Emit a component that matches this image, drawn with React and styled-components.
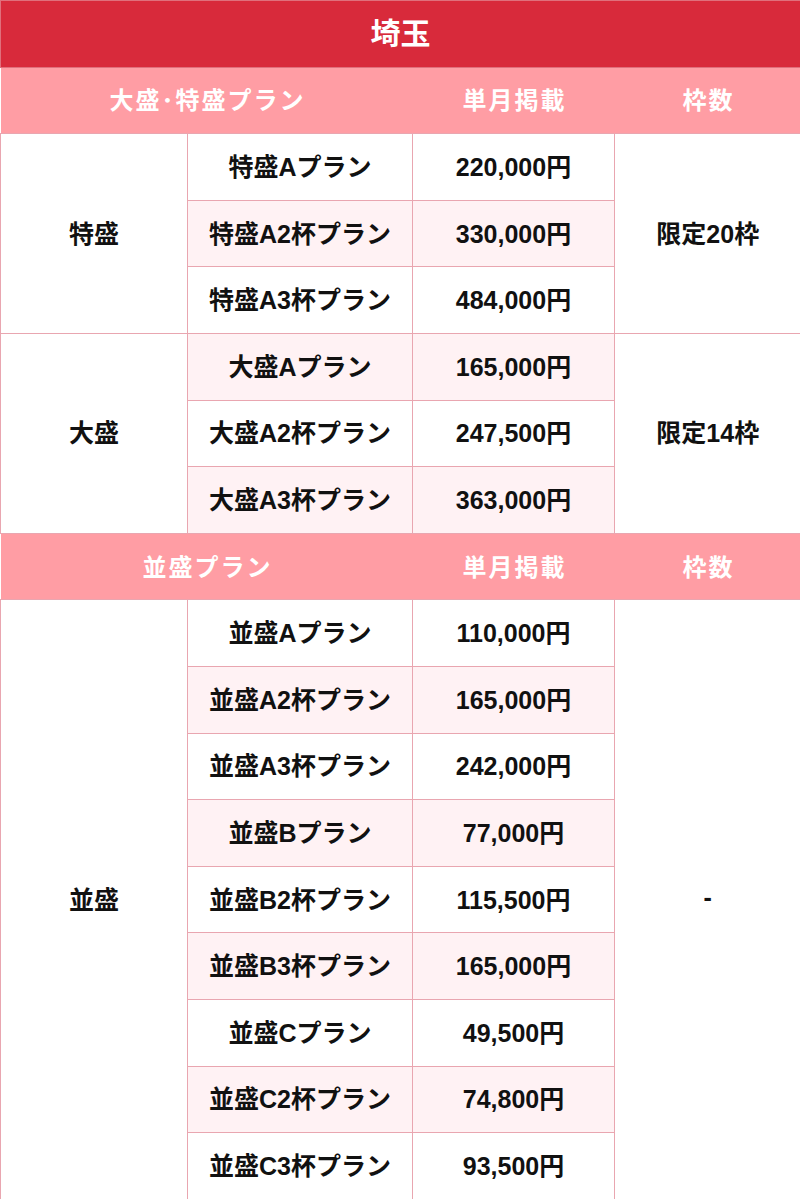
import React from "react";
import styled, { createGlobalStyle } from "styled-components";

const Global = createGlobalStyle`
  html, body { margin: 0; padding: 0; background: #fff; }
  body { font-family: "Liberation Sans", "Noto Sans CJK JP", sans-serif; }
`;

const LINE = "#e9a6b0";

const Table = styled.table`
  width: 800px;
  border-collapse: collapse;
  table-layout: fixed;
  font-weight: 700;
  font-size: 25px;
  color: #111;
`;

const Col = styled.col`
  width: ${(p) => p.$w}px;
`;

const Title = styled.th`
  height: 59.6px;
  background: #d82a3b;
  color: #fff;
  font-size: 30px;
  font-weight: 700;
  text-align: center;
  padding: 0 0 6px;
  border: 1px solid #e0707c;
`;

const HeadCell = styled.th`
  height: 62.6px;
  background: #ff9da4;
  color: #fff;
  font-size: 24px;
  font-weight: 700;
  text-align: center;
  padding: 0 0 3px 2px;
  letter-spacing: 2px;
`;

const Cell = styled.td`
  height: 61.6px;
  padding: 0 0 4px;
  text-align: center;
  vertical-align: middle;
  border: 1px solid ${LINE};
  background: ${(p) => (p.$alt ? "#fff2f4" : "#fff")};
`;

const SideCell = styled(Cell)`
  border-left: 1px solid ${LINE};
`;

const EdgeCell = styled(Cell)`
  border-right: none;
`;

const sections = [
  {
    head: "大盛･特盛プラン",
    groups: [
      {
        name: "特盛",
        limit: "限定20枠",
        plans: [
          ["特盛Aプラン", "220,000円"],
          ["特盛A2杯プラン", "330,000円"],
          ["特盛A3杯プラン", "484,000円"],
        ],
      },
      {
        name: "大盛",
        limit: "限定14枠",
        plans: [
          ["大盛Aプラン", "165,000円"],
          ["大盛A2杯プラン", "247,500円"],
          ["大盛A3杯プラン", "363,000円"],
        ],
      },
    ],
  },
  {
    head: "並盛プラン",
    groups: [
      {
        name: "並盛",
        limit: "-",
        plans: [
          ["並盛Aプラン", "110,000円"],
          ["並盛A2杯プラン", "165,000円"],
          ["並盛A3杯プラン", "242,000円"],
          ["並盛Bプラン", "77,000円"],
          ["並盛B2杯プラン", "115,500円"],
          ["並盛B3杯プラン", "165,000円"],
          ["並盛Cプラン", "49,500円"],
          ["並盛C2杯プラン", "74,800円"],
          ["並盛C3杯プラン", "93,500円"],
        ],
      },
    ],
  },
];

export default function App() {
  const rows = [];
  sections.forEach((sec, si) => {
    rows.push(
      <tr key={`h${si}`}>
        <HeadCell colSpan={2}>{sec.head}</HeadCell>
        <HeadCell>単月掲載</HeadCell>
        <HeadCell>枠数</HeadCell>
      </tr>
    );
    let idx = 0;
    sec.groups.forEach((g, gi) => {
      g.plans.forEach((p, pi) => {
        idx += 1;
        const alt = idx % 2 === 0;
        rows.push(
          <tr key={`r${si}-${gi}-${pi}`}>
            {pi === 0 && <SideCell rowSpan={g.plans.length}>{g.name}</SideCell>}
            <Cell $alt={alt}>{p[0]}</Cell>
            <Cell $alt={alt}>{p[1]}</Cell>
            {pi === 0 && <EdgeCell rowSpan={g.plans.length}>{g.limit}</EdgeCell>}
          </tr>
        );
      });
    });
  });

  return (
    <>
      <Global />
      <Table>
        <colgroup>
          <Col $w={187} />
          <Col $w={225} />
          <Col $w={202} />
          <Col $w={186} />
        </colgroup>
        <thead>
          <tr>
            <Title colSpan={4}>埼玉</Title>
          </tr>
        </thead>
        <tbody>{rows}</tbody>
      </Table>
    </>
  );
}
